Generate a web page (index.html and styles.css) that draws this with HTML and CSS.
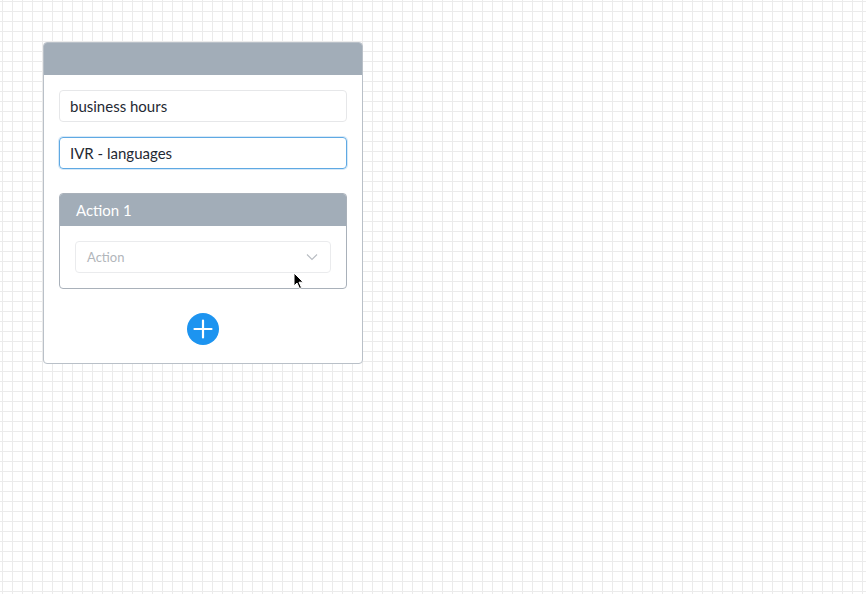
FILE: index.html
```html
<!DOCTYPE html>
<html>
<head>
<meta charset="utf-8">
<link rel="stylesheet" href="styles.css">
</head>
<body>
<div class="canvas">
  <div class="card">
    <div class="card-header"></div>
    <div class="card-body">
      <div class="field">business hours</div>
      <div class="field focused">IVR - languages</div>
      <div class="panel">
        <div class="panel-header">Action 1</div>
        <div class="panel-body">
          <div class="select">
            <span class="placeholder">Action</span>
            <svg class="chevron" width="12" height="8" viewBox="0 0 12 8"><path d="M1 1.5 L6 6.5 L11 1.5" fill="none" stroke="#b8bcc2" stroke-width="1.1"/></svg>
          </div>
        </div>
      </div>
      <div class="add-row">
        <button class="add-btn" aria-label="add">
          <svg width="32" height="32" viewBox="0 0 32 32"><path d="M16 7.5 V24.5 M7.5 16 H24.5" stroke="#fff" stroke-width="2.2" stroke-linecap="round"/></svg>
        </button>
      </div>
    </div>
  </div>
  <svg class="cursor" width="12" height="18" viewBox="0 0 12 18"><path d="M1 1 L1 14 L4 11 L6.5 16.5 L8.5 15.6 L6 10.2 L10.2 10.2 Z" fill="#000" stroke="#fff" stroke-width="1"/></svg>
</div>
</body>
</html>
```
FILE: styles.css
```css
html, body {
  margin: 0;
  padding: 0;
}
body {
  width: 866px;
  height: 594px;
  overflow: hidden;
  background-color: #ffffff;
  background-image:
    linear-gradient(to right, #ebebeb 1px, transparent 1px),
    linear-gradient(to bottom, #ebebeb 1px, transparent 1px);
  background-size: 10px 10px;
  background-position: 2px 1px;
  font-family: "Lato", "Open Sans", sans-serif;
  color: #1f2933;
}
.canvas {
  position: relative;
  padding: 42px 0 0 43px;
}
.card {
  width: 318px;
  height: 320px;
  border: 1px solid #b9c0c8;
  border-radius: 4px;
  background: #fff;
  overflow: hidden;
  display: flex;
  flex-direction: column;
}
.card-header {
  height: 32px;
  background: #a2adb8;
}
.card-body {
  padding: 15px 15px 0 15px;
  display: flex;
  flex-direction: column;
}
.field {
  box-sizing: border-box;
  height: 32px;
  border: 1px solid #e6e7e9;
  border-radius: 4px;
  padding: 0 10px;
  display: flex;
  align-items: center;
  font-size: 15px;
  color: #1f2933;
  margin-bottom: 15px;
}
.field.focused {
  border-color: #5fa9e3;
  box-shadow: 0 0 0 1px rgba(95, 169, 227, 0.25);
  margin-bottom: 24px;
}
.panel {
  border: 1px solid #a9b1ba;
  border-radius: 4px;
  overflow: hidden;
}
.panel-header {
  height: 32px;
  background: #a2adb8;
  color: #fff;
  font-size: 15px;
  display: flex;
  align-items: center;
  padding-left: 16px;
}
.panel-body {
  padding: 15px 15px 15px 15px;
}
.select {
  box-sizing: border-box;
  height: 32px;
  border: 1px solid #eaebed;
  border-radius: 4px;
  display: flex;
  align-items: center;
  justify-content: space-between;
  padding: 0 12px 0 11px;
}
.placeholder {
  font-size: 13px;
  color: #b2b6bb;
}
.chevron {
  display: block;
}
.add-row {
  display: flex;
  justify-content: center;
  padding-top: 24px;
}
.add-btn {
  width: 32px;
  height: 32px;
  border-radius: 50%;
  border: none;
  padding: 0;
  background: #1d94f0;
  display: flex;
  align-items: center;
  justify-content: center;
}
.add-btn svg {
  display: block;
}
.cursor {
  position: absolute;
  left: 293px;
  top: 272px;
}
```
